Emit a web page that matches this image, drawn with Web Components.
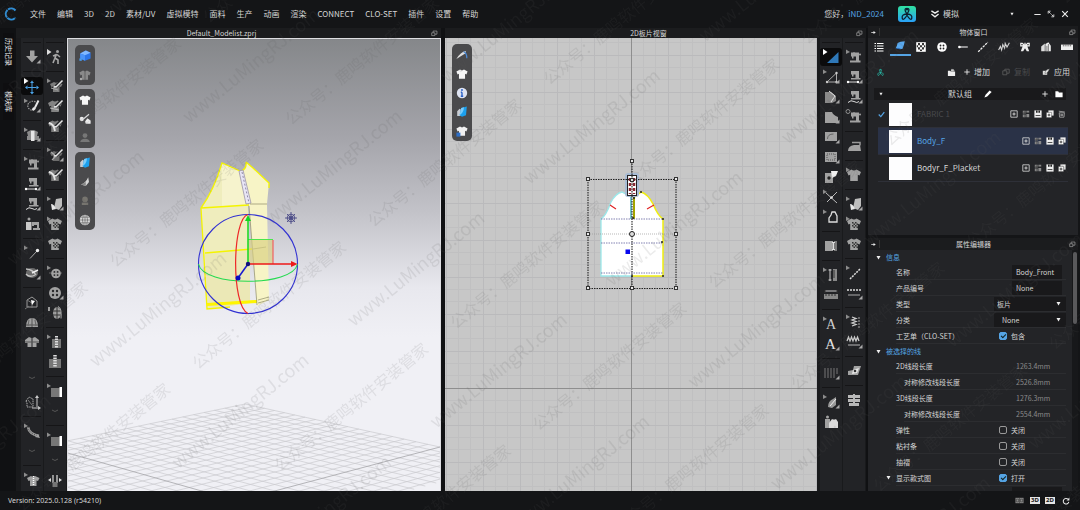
<!DOCTYPE html>
<html lang="zh-CN">
<head>
<meta charset="utf-8">
<title>Default_Modelist.zprj</title>
<style>
:root{--bar:#141517;--title:#1b1c1e;--panel:#232427;--line:#2e2f32;--text:#d6d6d6;--blue:#55a4e4;--dark:#19191b}
html,body{height:100%}
body{margin:0;background:#141517;color:var(--text);font-family:"Noto Sans CJK SC","Noto Sans",sans-serif;font-size:8px;line-height:12px;overflow:hidden}
</style>
</head>
<body>
<clo-app></clo-app>
<script>
/* ---------- icon set, drawn on a 20 x 20 grid ---------- */
const cur='<path d="M2 2.500l4 2.500-4 2z" fill="#8d8d8d"/>';
const curW='<path d="M2 2l4.500 3-4.500 3z" fill="#fff"/>';
const cor='<path d="M18.500 12.500v4h-4z" fill="#a8a8a8"/>';
const tee='<path d="M7.500 4.500q2.500 2 5 0l4.500 2.500-1.500 3.500-1.700-.7V16H6.200V9.800l-1.700.7L3 7z"/>';
const teeS='<path d="M9 6q2 1.500 4 0l4.500 2-1.500 3-1.500-.5V16H8v-5.500l-1.500.5L5 8z"/>';
const sew='<path d="M7 5.500h2.500V5h1v.5H15v8h1.500v2H6v-2h6V9.500H9.500v2H8v-2H7z"/><circle cx="16" cy="7.500" r="1"/>';
const sewS='<path d="M7 4h8v7h1.500v1.500H7V11h4.500V7.500H9.500v2H8v-2H7z"/>';
const check='<g fill="#343434"><path d="M8 8h1.500v1.500H8zM11 8h1.500v1.500H11zM9.500 9.500H11V11H9.500zM8 11h1.500v1.500H8zM11 11h1.500v1.500H11zM9.500 12.500H11V14H9.500zM12.500 9.500H14V11h-1.500zM12.500 12.500H14V14h-1.500z"/></g>';
const pen='<path d="M17.500 4l-6.500 6.500" fill="none" stroke="#232427" stroke-width="3.500"/><path d="M17.500 4.500l-6 6-2.500.5" fill="none" stroke="#e4e4e4" stroke-width="1.500"/>';
const L=(d,w=1,c='#a8a8a8',x='')=>`<path d="${d}" fill="none" stroke="${c}" stroke-width="${w}" ${x}/>`;
const btn='<circle cx="10" cy="10" r="6"/><g fill="#2a2a2c"><circle cx="8" cy="8" r="1.200"/><circle cx="12" cy="8" r="1.200"/><circle cx="8" cy="12" r="1.200"/><circle cx="12" cy="12" r="1.200"/></g>';
const fold='<path d="M4 15V9l3-3 1.500 1V15z" fill="#c8ccd2"/><path d="M7 14l2-9 7-2-1 11-5 2z" fill="#1ba0ee"/><path d="M7 14q5-3 5.500-10L9 5z" fill="#7accfa"/>';
const ICONS={
 down:'<path d="M8 3.500h4.500V9H16l-6 6.500L4 9h4z"/>'+cor,
 move:curW+L('M10 7v9M5.500 11.500h9',1,'#4ba3e8')+'<path d="M10 4.500l2 2.500H8zM10 18.500l2-2.500H8zM3 11.500L5.500 9.500v4zM17 11.500l-2.500-2v4z" fill="#4ba3e8"/>',
 lasso:cur+L('M13.500 6a5 4.500 0 1 0-1 8',1.200,'#999','stroke-dasharray="1.500 1"')+L('M16.500 4.500l-3.500 7',2,'#e8e8e8')+'<path d="M10 14q0-3 3-3l1 1q-1 3-4 2z" fill="#e8e8e8"/>'+cor,
 arrange:cur+'<path d="M5 7l4-2h3l4 2-1 4h2v4H5v-4h1z" fill="#8b8b8b"/><path d="M9 6h3.500v10H9z" fill="#e6e6e6"/>'+cor,
 sew:cur+sew,sewL:sewS+L('M4 15h10',1,'#ddd')+'<circle cx="4" cy="15" r="1.200" fill="#fff"/><circle cx="14" cy="15" r="1.200" fill="#fff"/>'+cor,
 sewC:sewS+L('M4 15.500q3-3 6-1t5 0',1,'#ddd')+cor,
 sewQ:'<circle cx="4" cy="4.500" r="2" fill="none" stroke="#8d8d8d"/>'+sew,
 people:'<circle cx="7" cy="5" r="1.500"/><path d="M4 8h5.500v8H4z" fill="#c9c9c9"/><path d="M10 8h7v6h1v2h-7v-2h4v-3h-3v1h-2z"/>',
 pin:cur+L('M8 15.500L15 8',1,'#aaa')+'<circle cx="15.500" cy="7.500" r="1.700" fill="#eee"/>',
 orbit:'<ellipse cx="10" cy="10" rx="6" ry="5" fill="#6a6a6a"/>'+L('M4 6q6 0 10 6M4 11q3 4 9 1',1.300,'#c4c4c4')+L('M10 10l6-3',1.500,'#eee')+cor,
 box:L('M5 8l5-3 5 4v6H5z',1,'#999')+L('M5 8l5 3M10 11v5M3 17l4-3',1,'#777')+'<path d="M9 8l4 1-3 4z" fill="#fff"/>',
 hat:'<path d="M4 15q0-9 6-9t6 9z"/>'+L('M4 13h12M10 6v9',1,'#555')+L('M7 8l-1 6M13 8l1 6',1,'#666'),
 open:'<path d="M3 8l4-3 2.500 1v9H5.500v-4H3zM17 8l-4-3-2.500 1v9h4v-4H17z"/>'+L('M3 10h14',1,'#555'),
 chev:L('M7 9l3 1.500L13 9',1,'#555'),
 measure:L('M4 9l3-4 4 2v8H5v-4z',1,'#aaa','stroke-dasharray="1.500 .7"')+L('M6 8l4 5',1,'#777')+L('M15 5v10M10 16h7',1,'#ccc')+'<path d="M15 3l2 3h-4zM19 16l-3-2v4z" fill="#ccc"/>',
 tape:cur+L('M6 6q1 7 11 9',2.500,'#9a9a9a')+L('M6 6q1 7 11 9',1,'#333','stroke-dasharray="1 1.500"')+'<path d="M18 17l-5-1 3-3z"/>',
 shirtZip:cur+teeS+L('M11.500 6v10',1.500,'#fff','stroke-dasharray="1 1"'),
 walk:curW.replace('#fff','#ddd')+'<circle cx="12.500" cy="4.500" r="1.500"/>'+L('M11.500 7L10 11l3 2v4M10 11l-2 5M11.500 7.500L8 9M12 7.500l3 2.500',1.600,'#a8a8a8'),
 penTee:cur+'<g fill="#7c7c7c">'+teeS+'</g>'+L('M6 12l7 2',1,'#aaa')+pen,
 penTee2:'<g fill="#838383">'+tee+'</g>'+L('M5 12l9 2',1,'#bbb')+pen,
 penTee3:'<g fill="#7c7c7c">'+tee+'</g>'+L('M4 7q5 1 6 8',1.800,'#e4e4e4')+pen,
 penTee4:cur+'<g fill="#6c6c6c">'+teeS+'</g>'+L('M6 7l5 4-4 4',1.200,'#aaa')+pen+cor,
 press:cur+'<path d="M9 14l2-9 6-1v8l-3 4z" fill="#bdbdbd"/><path d="M6 10q3 0 5 5l-4 1z" fill="#e8e8e8"/>'+cor,
 checkTee:cur+tee+check,checkTee2:tee+check,
 btnA:cur+'<path d="M4 9.500h13v1H4z" fill="#666"/><g transform="translate(3 2.500) scale(.8)">'+btn+'</g>',btn:btn+cor,
 btnB:'<path d="M3 4h2v4H3z"/><ellipse cx="12" cy="10" rx="4" ry="6"/>'+L('M8 8h8M8 12h8M12 4v12',1,'#333')+L('M13 3.500q4 1 3 12',1,'#aaa'),
 zip:cur+'<path d="M7 7h9v9H7z" fill="#777"/>'+L('M11.500 4v12',3,'#ddd','stroke-dasharray="1.500 1"'),
 zip2:'<path d="M4 7h12v9H4z" fill="#777"/>'+L('M10 3v12',3.500,'#ddd','stroke-dasharray="1.500 1"'),
 trim:cur+'<path d="M6 7h10v9H6z" fill="#777"/><path d="M14.500 6h2.500v10h-2.500z" fill="#fff"/>',
 align:L('M8 4v8M12 4v8',1.500,'#bbb')+'<path d="M7.500 11h5v5h-5z" fill="#777"/><path d="M3 9l3-2v4zM17 9l-3-2v4z" fill="#ddd"/>',
 tri:curW+'<path d="M17.500 5v11H6z" fill="#2f78b8"/>',
 triE:cur+L('M15.500 6v9H6z',1,'#aaa')+'<g fill="#ccc"><circle cx="15.500" cy="6" r="1.200"/><circle cx="15.500" cy="15" r="1.200"/><circle cx="6" cy="15" r="1.200"/></g>'+cor,
 shape:'<path d="M4 5h6l5 4v5l-4 2H4z" fill="#8a8a8a"/>'+L('M8 4l6 5-4 6',1,'#e0e0e0')+cor,
 poly:'<path d="M4 5h7q1 3 6 5v6H4z"/>'+cor,
 rect:'<path d="M4 5h12v9H4z"/>'+L('M6.500 12q0-5 6-5',1,'#666')+cor,
 rect2:'<path d="M4 5h12v10H4z"/>'+L('M6 7h8v6H6z',1,'#555','stroke-dasharray="1 1"')+cor,
 dart:'<path d="M4 6h8v10H4z"/><path d="M10 4h7l-2 5-4 2z" fill="#f0f0f0"/><circle cx="8" cy="11" r="1.700" fill="#222"/>',
 cut:cur+L('M6 15L16 5M5 6l11 10',1,'#bbb')+'<circle cx="10.500" cy="10.500" r="1.300" fill="#ddd"/>',
 trace:cur+L('M8 15v-4l2-3 1-3h3l2 4v6z',1.300,'#ddd'),
 fold2:'<path d="M4 5h8v10H4z"/><path d="M13 5h3v10h-3z" fill="#777"/>'+L('M12.500 6v8M11 6.500h3M11 13.500h3',1,'#ddd'),
 ruler:cur+'<path d="M12 4h4v12h-4z" fill="#888"/>'+L('M9 4v12M7.500 5h3M7.500 15h3',1,'#ccc')+L('M12 6h2M12 8h2M12 10h2M12 12h2',1,'#333'),
 rulerH:L('M4 6h12',1,'#ccc')+'<path d="M3 9h14v5H3z" fill="#888"/>'+L('M4 5v3M16 5v3M5 9v2M8 9v2M11 9v2M14 9v2',1,'#333'),
 seam:cur+L('M6 16L16 6',1.500,'#ddd','stroke-dasharray="2 1"'),
 seamH:L('M3 7h14',1.500,'#ddd','stroke-dasharray="2 1"')+L('M4 12h12',1,'#aaa')+cor,
 textA:cur+'<text x="5" y="15" font-family="Liberation Serif,serif" font-size="14" fill="#d0d0d0">A</text>',
 textB:'<text x="4" y="15" font-family="Liberation Serif,serif" font-size="15" fill="#e4e4e4">A</text>'+cor,
 zig:cur+L('M8 5l4 1.500-4 1.500 4 1.500-4 1.500 4 1.500-4 1.500',1.300,'#ccc')+L('M15 5v11',1,'#aaa','stroke-dasharray="2 1"'),
 zigH:L('M3 9l1.500-4L6 9l1.500-4L9 9l1.500-4L12 9l1.500-4L15 9',1.300,'#ccc')+L('M4 13h12',1,'#bbb')+cor,
 bars:L('M4 5v10M7 5v10M10 5v10M13 5v10M16 5v6',1,'#777')+cor,
 steam:'<path d="M4 10l5-1 1-4h7l-1 3-2 6H4z"/><path d="M9 9l6-2-2 5-5 1z" fill="#e8e8e8"/><circle cx="11" cy="10" r="1.300" fill="#333"/>',
 iron:'<path d="M4 15q0-5 6-6h6l1 6z"/>'+L('M8 6.500h8v3',1.500,'#999'),
 tee:cur+tee,handy:cur+'<path d="M7 15q0-6 5-8l3-2v8l-4 3z" fill="#999"/>'+L('M9 14l6-7',1,'#eee')+cor,
 quilt:'<path d="M4 5h5v3H4zM11 5h5v3h-5zM4 9h5v3H4zM11 9h5v3h-5zM5 13h4v3H5zM11 13h4v3h-4zM9 4h2v12H9z" fill="#b8b8b8"/>',
 avatar:'<circle cx="6.500" cy="5" r="1.500"/><path d="M4 7h5v9H4z"/><path d="M8 16v-5l3-4q2 1 4 0l2 3v6z" fill="#dadada"/>',
 cube:'<path d="M4 7l7-4 6 3v7l-7 3-6-3z" fill="#2c75e8"/><path d="M4 7l7-4 6 3-7 3z" fill="#80b8ff"/><path d="M10 9v7l-6-3V7z" fill="#4a94f8"/><path d="M3 13h3v3H3z" fill="#4aa0f0"/>',
 ghost:'<g fill="#8a8a8a">'+tee+'</g><path d="M10 5v11" stroke="#555"/><circle cx="5" cy="15" r="1.500" fill="#aaa"/>',
 white:'<g fill="#f6f6f6">'+tee+'</g>',
 scis:L('M8 10l7-6',1.500,'#ddd')+'<circle cx="6" cy="10" r="2.700" fill="#eee"/><path d="M10 13l3-4 4 3v4h-6z" fill="#eee"/>',
 head:'<g fill="#777"><circle cx="10" cy="7" r="3"/><path d="M4 15q1-4 6-4t6 4z"/></g>',fold,
 feather:'<path d="M5 13q6-2 9-9l1 6-4 5z" fill="#d6d6d6"/><path d="M5 13l6-3 0 5z" fill="#888"/>',
 bust:'<g fill="#77756f"><circle cx="10" cy="8" r="3.500"/><path d="M6 15v-3h8v3z"/></g>',
 globe:'<circle cx="10" cy="10" r="6.500" fill="#d8d8d8"/>'+L('M3.500 10h13M10 3.500v13M5 6.500h10M5 13.500h10M8 4q-2.500 6 0 12M12 4q2.500 6 0 12',.7,'#555'),
 needle:'<path d="M3 15q5-9 12-10l-1 3z" fill="#ddd"/>'+L('M12 6q4 1 4 8',1.500,'#4a8ad8'),
 info:'<circle cx="10" cy="10" r="6.500" fill="#dfe4f2"/>'+L('M10 9v5M8.500 9H10M8.500 14h3',1.700,'#2b62c8')+'<circle cx="10" cy="6.300" r="1.200" fill="#2b62c8"/>',
 teeInfo:'<g fill="#f0f0f0">'+tee+'</g><path d="M3 12h5v5H3z" fill="#2f70c8"/>',
 list:'<path d="M6 2h13v2H6zM6 7h13v2H6zM6 12h13v2H6zM6 17h13v2H6zM1 2h3v2H1zM1 7h3v2H1zM1 12h3v2H1zM1 17h3v2H1z" fill="#fff"/>',
 fabric:'<path d="M6 5q4-3 12-3-1 6-4 13-5 0-11-2 2-3 3-8z" fill="#5aaaf0"/><path d="M2 14l5-1 5 3z" fill="#2a6fc0"/>',
 grid:'<path d="M2 2h16v16H2z" fill="#fff"/><path d="M5 3.500h3.300V7H5zM11.700 3.500H15V7h-3.300zM8.300 7h3.400v3.500H8.300zM15 7h2v3.500h-2zM5 10.500h3.300V14H5zM11.700 10.500H15V14h-3.300zM8.300 14h3.400v2.500H8.300zM3 7h2v3.500H3z" fill="#333"/>',
 button:'<circle cx="10" cy="10" r="8" fill="#fff"/><g fill="#222"><circle cx="7.500" cy="7.500" r="1.500"/><circle cx="12.500" cy="7.500" r="1.500"/><circle cx="7.500" cy="12.500" r="1.500"/><circle cx="12.500" cy="12.500" r="1.500"/></g>',
 stitch:L('M4 10h14',1.700,'#fff')+'<circle cx="4" cy="10" r="2.200" fill="#fff"/>',
 dash:L('M2 18L18 2',2.200,'#eee','stroke-dasharray="4 1.500"'),
 pucker:L('M1 15l3-6 2 6 2-9 3 6 1-8 3 6 4-7',1.800,'#ddd'),
 bind:'<path d="M2 3h4l3 3V3h2v3l3-3h4v6h-4l3 8h-4l-3-5-3 5H3l3-8H2z" fill="#eee"/><path d="M4 5h2v2H4zM14 5h2v2h-2z" fill="#222"/>',
 fill:'<path d="M2 17V9l6-5v13z" fill="#ddd"/><path d="M9 5l5-3 4 6v9H9z" fill="#eee"/>'+L('M14 5v12M11.500 8v9',1,'#333'),
 tape2:'<path d="M0 6h20v9H0z" fill="#eee"/>'+L('M4 6v3M7 6v3M10 6v3M13 6v3M16 6v3',1,'#333'),
 addf:'<path d="M2 6h5l1.500 2H18v10H2z" fill="#eee"/><path d="M9 3l6 1v4H9z" fill="#ccc"/>'+L('M12 2l4 4',1.500,'#eee'),
 plus:L('M10 1v18M1 10h18',3,'#eee'),
 copy:L('M2 7h10v10H2zM7 7V3h11v10h-6',1.800,'#666'),
 apply:'<path d="M2 7h11v10H2z" fill="#ddd"/><path d="M7 13q1-9 12-11-1 6-9 12z" fill="#eee" stroke="#222"/>',
 folder:'<path d="M1 3h7l2 3h9v12H1z" fill="#fff"/>',
 pencil:'<path d="M1 19l3-7L14 1l5 4L8 16z" fill="#fff"/>',
 boxp:L('M2 2h16v16H2z',2,'#ddd')+L('M10 6v8M6 10h8',2.200,'#ddd'),
 four:'<path d="M2 2h7v7H2zM11 2h7v5h-7zM2 11h7v7H2zM11 10h7v8h-7z" fill="#8a8a8a"/>'+L('M2 6h16M6 2v16',1,'#333'),
 save:'<path d="M1 1h18v18H1z" fill="#eee"/><path d="M5 1h10v6H5zM4 13h12v2H4z" fill="#222"/><path d="M9 1h2v9H9z" fill="#eee"/>',
 dup:'<path d="M6 1h13v13H6z" fill="#eee"/><path d="M1 6h13v13H1z" fill="#fff" stroke="#222"/>'+L('M7.500 9v7M4 12.500h7',2,'#222'),
 trash:L('M3 7h13l-1 11H4zM2 3l15 2M6 11h7M6 14h7',1.800,'#bbb'),
 pop:L('M2 8h9v8H2zM6 8V3h11v9h-6',1.800,'#aaa'),
 arrow:L('M1 10h12',3,'#eee')+'<path d="M10 4l9 6-9 6z" fill="#eee"/>',
 clo:L('M10 10Q5 3 10 3t0 7M9 10q8 0 7 5t-7-5M11 10q-8 0-7 5t7-5',1.600,'currentColor')+'<circle cx="10" cy="4" r="1.500" fill="currentColor"/>',
 dbl:L('M1 2l9 6 9-6M1 10l9 7 9-7',3.500,'#eee'),
 caret:'<path d="M2 4h16l-8 14z" fill="#eee"/>',
 min:L('M1 10h18',2.800,'#eee'),
 max:L('M3 9V3h6M11 17h6v-6M4 4l5 5M16 16l-5-5',2.300,'#ddd'),
 x:L('M3 3l14 14M17 3L3 17',2.800,'#eee'),
 tick:L('M2 10l6 6L18 3',3.500,'#55a4e4'),
 split:'<path d="M1 4h18v12H1z" fill="#8a8a8a"/>'+L('M10 4v12M3 7h5v6H3zM12 7h5v6h-5z',1,'#222'),
 redo:L('M15 5.500a7 7 0 1 0 2 6.500',2.600,'#eee')+'<path d="M18.500 1v8h-7z" fill="#eee"/>'
};
const ic=(n,s=20)=>`<svg viewBox="0 0 20 20" width="${s}" height="${s}" fill="#a2a2a2" aria-hidden="true">${ICONS[n]||''}</svg>`;
const base='*{box-sizing:border-box}button{all:unset;box-sizing:border-box;display:flex;align-items:center;justify-content:center;cursor:default}svg{display:block;flex:none}a{color:inherit;text-decoration:none}';
function define(tag,html,setup){
  customElements.define(tag,class extends HTMLElement{
    constructor(){super();this.attachShadow({mode:'open'})}
    connectedCallback(){this.shadowRoot.innerHTML='<style>'+base+'</style>'+(typeof html==='function'?html(this):html);if(setup)setup(this.shadowRoot,this)}
  });
}

define('top-menu',()=>`<style>
:host{display:flex;align-items:center;height:28px;background:var(--bar);padding:0 10px 0 4px}
nav{display:flex;gap:11px;margin-left:12px;white-space:nowrap}.r{margin-left:auto;display:flex;align-items:center}
.u{color:var(--blue);margin-right:14px}.l{display:flex;width:18px;height:16px;border-radius:3px;background:linear-gradient(#30e0a0,#2aa0f8);color:#0c2030;align-items:center;justify-content:center;margin-right:15px}
.sim{gap:4px;margin-right:48px}.w{display:flex;gap:4px}.w button{width:10px}.w button:first-child{margin-right:11px}
</style><svg viewBox="0 0 14 14" width="14" height="14"><path d="M11.500 3.500A5.500 5.500 0 1 0 11.500 10.500" fill="none" stroke="#2f8fd8" stroke-width="2" stroke-dasharray="8 .6"/></svg>
<nav>${['文件','编辑','3D','2D','素材/UV','虚拟模特','面料','生产','动画','渲染','CONNECT','CLO-SET','插件','设置','帮助'].map(t=>`<a href="#">${t}</a>`).join('')}</nav>
<div class="r"><span>您好，</span><a class="u" href="#">iND_2024</a><span class="l">${ic('clo',16)}</span>
<button class="sim">${ic('dbl',8)}模拟</button>
<div class="w"><button aria-label="菜单">${ic('caret',4)}</button><button aria-label="最小化">${ic('min',7)}</button><button aria-label="最大化">${ic('max',8)}</button><button aria-label="关闭">${ic('x',8)}</button></div></div>`);

define('side-tab',`<style>:host{display:flex;align-items:center;justify-content:center;writing-mode:vertical-rl;text-orientation:sideways;background:#0e0e10;width:11px;font-size:7px;line-height:11px;color:#eee}</style><slot></slot>`);

define('view-title',()=>`<style>:host{display:flex;align-items:center;height:10px;background:var(--title);line-height:10px;font-size:7px}span{flex:1;text-align:center}button{width:14px}</style><span><slot></slot></span><button aria-label="弹出窗口">${ic('pop',7)}</button>`);

define('panel-title',()=>`<style>:host{display:flex;align-items:center;height:12px;background:var(--title);line-height:12px;font-size:7px}span{flex:1;text-align:center}button{width:11px}i{width:1px;height:8px;background:#333}</style><button aria-label="折叠">${ic('arrow',5)}</button><i></i><span><slot></slot></span><button aria-label="弹出窗口">${ic('pop',7)}</button>`);

/* A column of tool buttons: "-" is a rule, "*" marks the active tool, "chev" ends a group. */
define('tool-column',h=>`<style>
:host{display:flex;flex-direction:column;width:22px;background:#222326;overflow:hidden}
button{height:20px;width:22px;flex:none}.on{background:#0b0b0c;border-radius:3px;height:18px;margin:1px 0}
hr{border:0;margin:4px 2px;height:1px;background:#151517;flex:none}b{flex:none}</style>`+
h.getAttribute('tools').split(' ').map(t=>t==='-'?'<hr>':/^\d+$/.test(t)?`<b style="height:${t}px"></b>`:t[0]==='*'?`<button class="on" aria-label="${t.slice(1)}">${ic(t.slice(1))}</button>`:`<button aria-label="${t}">${ic(t)}</button>`).join(''));

define('float-palette',h=>`<style>:host{display:flex;flex-direction:column;padding:1px 0;width:20px;background:#4a4a4c;border-radius:5px}button{height:19px}</style>`+
h.getAttribute('tools').split(' ').map(t=>`<button aria-label="${t}">${ic(t,16)}</button>`).join(''));

/* Perspective floor: maps the unit square onto a quad and draws its lines. */
function floor(){
  const P=[[245,404],[440,447],[237,501],[43,446]],[a,b,c,d]=P;
  const dx1=b[0]-c[0],dx2=d[0]-c[0],sx=a[0]-b[0]+c[0]-d[0],dy1=b[1]-c[1],dy2=d[1]-c[1],sy=a[1]-b[1]+c[1]-d[1];
  const D=dx1*dy2-dx2*dy1,g=(sx*dy2-dx2*sy)/D,k=(dx1*sy-sx*dy1)/D;
  const m=(u,v)=>{const w=g*u+k*v+1;return [((b[0]-a[0]+g*b[0])*u+(d[0]-a[0]+k*d[0])*v+a[0])/w,((b[1]-a[1]+g*b[1])*u+(d[1]-a[1]+k*d[1])*v+a[1])/w].map(n=>n.toFixed(1)).join(' ')};
  let s='',e='';const N=18;
  for(let i=0;i<=N+5;i++){const t=i/N,p=`M${m(t,0)}L${m(t,1.3)}M${m(0,t)}L${m(1.3,t)}`;if(i===N)e=p;else s+=p}
  return `<path d="${s}" stroke="#cacacf" stroke-width=".7" fill="none"/><path d="${e}" stroke="#a4a4a8" stroke-width=".8" fill="none"/>`;
}
define('view-3d',()=>`<style>
:host{display:block;position:relative;overflow:hidden;border:1px solid #dedee2;border-bottom:0;background:linear-gradient(#85878a,#a5a5ab 22%,#c2c2c8 38%,#e8e8ee 55%,#f0f0f5 66%)}
.s{position:absolute;width:100%;height:100%}.p{position:absolute;left:7px;top:6px;display:flex;flex-direction:column;gap:4px}</style>
<svg class="s" viewBox="68 39 372 452" preserveAspectRatio="xMidYMid slice">${floor()}
<path d="M201 208Q214 190 222 163L240 171 248 204 250 303 207 309Z" fill="#efedbd"/>
<path d="M222 163L240 171 248 204 222 206Z" fill="#f6f3cd"/>
<path d="M246 162L253 168 269 183 267 204 269 300 257 306 249 206 241 171Q247 170 246 162Z" fill="#f7f4c6"/>
<path d="M205 253L250 249V303L207 309Z" fill="#ebe8b6"/>
<path d="M201 208Q214 190 222 163L240 171M246 162L253 168 269 183V188M201 208L249 205M205 253L252 249M207 304L257 301M201 208L207 309 230 307M246 162Q247 169 241 171" fill="none" stroke="#f4f400" stroke-width="1.300"/>
<path d="M207 303L257 300V303L207 306Z" fill="#fff500"/>
<path d="M239 171L243 170 251 203 246 204Z" fill="#e9e6f6" stroke="#8f88a0" stroke-width=".7"/><path d="M242 172L249 203" stroke="#777090" stroke-width=".8" stroke-dasharray="2 2"/>
<path d="M250 204L267 204M249 206L257 305M253 249L266 247M258 300L269 297M258 303L269 300" stroke="#8d8b68" stroke-width=".7" fill="none"/>
<path d="M248 240H273V264H248Z" fill="#d8d080" opacity=".65"/><path d="M248 239.500H273" stroke="#4be64b"/><path d="M273 240V264" stroke="#f06060" stroke-width="1.200"/>
<circle cx="248" cy="264" r="49.500" fill="none" stroke="#3232d2" stroke-width="1.100"/>
<path d="M198.500 264C203 287 293 287 297.500 264" fill="none" stroke="#25da50" stroke-width="1.100"/>
<path d="M248 214.500C232 218 231 306 248 313.500" fill="none" stroke="#ee2828" stroke-width="1.200"/>
<path d="M248 264V220" stroke="#10d820" stroke-width="1.500"/><path d="M248 215L251 221H245Z" fill="#10d820"/>
<path d="M248 264H292" stroke="#ee1818" stroke-width="1.500"/><path d="M297.500 264L291 267V261Z" fill="#ee1818"/>
<path d="M248 264L238 278" stroke="#1818d0" stroke-width="1.500"/><circle cx="238" cy="278" r="2.500" fill="#0808c0"/><circle cx="248" cy="264" r="2.200" fill="#10107a"/>
<g fill="none" stroke="#4a4a86" stroke-width=".9"><circle cx="291" cy="218" r="3.800"/><circle cx="291" cy="218" r="1.800"/><path d="M291 212V224M285 218H297M287 214L295 222M295 214L287 222"/></g>
</svg>
<div class="p"><float-palette tools="cube ghost"></float-palette><float-palette tools="white scis head"></float-palette><float-palette tools="fold feather bust globe"></float-palette></div>`);

define('view-2d',()=>{
 const h=[[588,179],[676,179],[588,234],[676,234],[588,288],[632,288],[676,288],[632,161],[632,180]].map(([x,y])=>`<rect x="${x-1.5}" y="${y-1.5}" width="3" height="3"/>`).join('');
 const dots=[[641,192],[634,198],[633,218],[663,219],[662,242],[632,276],[663,276]].map(([x,y])=>`<circle cx="${x}" cy="${y}" r="1"/>`).join('');
 return `<style>:host{display:block;position:relative;overflow:hidden;background:#c7c7c7}.s{position:absolute;width:100%;height:100%}.p{position:absolute;left:7px;top:6px}</style>
<svg class="s" viewBox="445 38 372 453" preserveAspectRatio="xMidYMid slice">
<defs><pattern id="g" x="631" y="388" width="37" height="37" patternUnits="userSpaceOnUse"><path d="M12.500 0V37M24.500 0V37M0 12.500H37M0 24.500H37" stroke="#c0c0c1"/><path d="M.5 0V37M0 .5H37" stroke="#bababc"/></pattern></defs>
<rect x="400" y="0" width="500" height="540" fill="url(#g)"/>
<path d="M631.500 0V540M400 388.500H900" stroke="#8e8e8e"/>
<path d="M601 276V219Q606 216 611 202 616 193 622 192L632 197 641 192Q648 194 653 204 658 216 663 219V276Z" fill="#fff"/>
<path d="M632 276H601V219Q606 216 611 202 616 193 622 192L629 196" fill="none" stroke="#9be8ea" stroke-width="1.300"/>
<path d="M631 196V219" stroke="#76c4cc" stroke-width="2"/><path d="M634 197V219" stroke="#a4a400" stroke-width="2"/>
<path d="M635 197L641 192Q648 194 653 204 658 216 663 219V276H632" fill="none" stroke="#f0ee10" stroke-width="1.500"/>
<path d="M601 219H663M601 243H663M601 273H663" stroke="#6262a0" stroke-width=".8" stroke-dasharray="1.500 1"/>
<path d="M588 234H676" stroke="#999" stroke-width=".7" stroke-dasharray="1 1"/>
<path d="M610 205L616 209M647 209L654 205" stroke="#e02020" stroke-width="1.100"/>
<rect x="625" y="173" width="14" height="24" rx="3" fill="#a9bdd6"/><rect x="627.500" y="175.500" width="9" height="20" fill="#fff" stroke="#222"/><path d="M630 178V194M634 178V194" stroke="#8c2631" stroke-width="2.500" stroke-dasharray="3 2"/>
<path d="M588 179.500H676V288.500H588ZM632 161V288" fill="none" stroke="#222" stroke-width="1.100" stroke-dasharray="1.500 1"/>
<g fill="#e8e8e8" stroke="#333" stroke-width="1">${h}</g><g fill="#222">${dots}</g>
<circle cx="632" cy="234" r="2.500" fill="#ddd" stroke="#222"/><rect x="625.500" y="249.500" width="4.500" height="4.500" fill="#0808ee"/></svg>
<float-palette class="p" tools="needle white info fold teeInfo"></float-palette>`});

define('fabric-row',h=>{
 const on=h.hasAttribute('selected'),used=h.hasAttribute('used');
 return `<style>:host{display:flex;align-items:center;height:27px;margin:0 10px;background:${on?'#2a3247':'transparent'};border-bottom:1px solid #2e3038}
.c{width:11px}.t{width:23px;height:23px;background:#fdfdfe;margin-right:5px}.n{flex:1;color:${on?'var(--blue)':used?'#48494c':'var(--text)'}}
button{width:12px}.b{display:flex}</style><span class="c">${used?ic('tick',7):''}</span><span class="t"></span><span class="n"><slot></slot></span>
<span class="b">${['boxp','four','save','dup'].concat(used?['trash']:[]).map(n=>`<button aria-label="${n}">${ic(n,8)}</button>`).join('')}</span>`});

define('object-panel',()=>`<style>
:host{display:flex;flex-direction:column;background:var(--panel)}
.tabs{display:flex;padding:0 1px;height:18px}.tabs button{flex:1}.tabs .on{border-bottom:2px solid var(--blue)}
.act{display:flex;align-items:center;height:32px;padding:0 8px 0 8px}.act button{gap:4px}.a1{margin-left:auto}.act .a2{margin-left:8px}.act .a3{margin-left:12px;color:#4a4b4d}.act .a4{margin-left:12px}.clo{color:#27b7a4}
.grp{display:flex;align-items:center;height:12px;margin:0 12px 1px 6px;background:var(--dark)}.grp .n{flex:1;display:flex;justify-content:center;align-items:center;gap:12px;padding-left:14px}.grp button{width:14px}</style>
<panel-title>物体窗口</panel-title>
<div class="tabs">${['list','fabric','grid','button','stitch','dash','pucker','bind','fill','tape2'].map((n,i)=>`<button class="${i==1?'on':''}" aria-label="${n}">${ic(n,n==='list'?10:12)}</button>`).join('')}</div>
<div class="act"><span class="clo">${ic('clo',9)}</span><button class="a1" aria-label="打开">${ic('addf',9)}</button><button class="a2">${ic('plus',6)}增加</button><button class="a3" disabled>${ic('copy',8)}复制</button><button class="a4">${ic('apply',8)}应用</button></div>
<div class="grp"><button aria-label="展开">${ic('caret',4)}</button><span class="n">默认组${ic('pencil',8)}</span><button aria-label="增加">${ic('plus',6)}</button><button aria-label="文件夹">${ic('folder',8)}</button></div>
<fabric-row used>FABRIC 1</fabric-row><fabric-row selected>Body_F</fabric-row><fabric-row>Bodyr_F_Placket</fabric-row>`);

define('prop-row',h=>{
 const k=h.getAttribute('kind'),v=h.getAttribute('value')||'',l=h.getAttribute('label'),ind=h.hasAttribute('indent'),sub=h.hasAttribute('group');
 const f=k==='input'?`<input id="f" type="text" value="${v}">`:k==='select'?`<span class="sel"><select id="f"><option>${v}</option></select>${ic('caret',5)}</span>`:k==='check'?`<span class="ck"><input id="f" type="checkbox" ${h.hasAttribute('on')?'checked':''}><label for="f">${v}</label></span>`:`<output id="f">${v}</output>`;
 return `<style>:host{display:flex;height:16px;flex:none;align-items:center;margin:0 12px 0 ${ind?36:28}px;border-bottom:1px solid #2c2d30;font-size:7px;white-space:nowrap}
.l{flex:1;display:flex;align-items:center}.l svg{margin:0 5px 0 -10px}.v{width:72px;display:flex;flex:none}
input[type=text]{font:inherit;color:var(--text);border:0;background:var(--dark);width:50px;height:14px;margin-left:18px;padding:0 4px;outline:0}
.sel{position:relative;display:block;width:72px}.sel svg{position:absolute;right:5px;top:4px}select{appearance:none;font:inherit;color:var(--text);border:0;background:var(--dark);width:72px;height:14px;padding:0 ${v==='None'?8:3}px;outline:0}
.ck{display:flex;align-items:center;gap:4px;padding-left:5px}input[type=checkbox]{appearance:none;width:8px;height:8px;margin:0;border:1px solid #999;border-radius:2px}
input:checked{border-color:var(--blue);background:var(--blue)}input:checked::after{content:"";display:block;width:4px;height:2px;border:solid #122;border-width:0 0 1px 1px;transform:translate(1px,1px) rotate(-45deg)}
output{padding-left:22px;color:#8b8b8b}</style><label class="l" for="f">${sub?ic('caret',5):''}${l}</label><span class="v">${f}</span>`});

define('prop-group',()=>`<style>:host{display:block;flex:none}h3{margin:0;display:flex;align-items:center;gap:5px;height:14px;padding-left:8px;font:inherit;font-size:7px;color:var(--blue)}</style><h3>${ic('caret',5)}<slot name="t"></slot></h3><slot></slot>`);

define('property-panel',`<style>:host{display:flex;flex-direction:column;overflow:hidden;background:var(--panel)}.b{flex:1;min-height:0;overflow:hidden;display:flex}.l{flex:1;min-width:0;overflow:hidden}.sb{width:6px;background:#17181a;padding:2px 1px;margin-left:-6px}.sb i{display:block;width:4px;height:72px;border-radius:2px;background:#59595b}</style>
<panel-title>属性编辑器</panel-title><div class="b"><div class="l">
<prop-group><span slot="t">信息</span>
<prop-row label="名称" kind="input" value="Body_Front"></prop-row><prop-row label="产品编号" kind="input" value="None"></prop-row><prop-row label="类型" kind="select" value="板片"></prop-row><prop-row label="分类" kind="select" value="None"></prop-row><prop-row label="工艺单（CLO-SET）" kind="check" on value="包含"></prop-row></prop-group>
<prop-group><span slot="t">被选择的线</span>
<prop-row label="2D线段长度" value="1263.4mm"></prop-row><prop-row indent label="对称修改线段长度" value="2526.8mm"></prop-row><prop-row label="3D线段长度" value="1276.3mm"></prop-row><prop-row indent label="对称修改线段长度" value="2554.4mm"></prop-row>
<prop-row label="弹性" kind="check" value="关闭"></prop-row><prop-row label="粘衬条" kind="check" value="关闭"></prop-row><prop-row label="抽褶" kind="check" value="关闭"></prop-row><prop-row group label="显示款式图" kind="check" on value="打开"></prop-row><prop-row label="" kind="input" value="0"></prop-row></prop-group>
</div><div class="sb"><i></i></div></div>`);

define('status-bar',()=>`<style>:host{display:flex;align-items:center;height:19px;padding:0 9px 0 8px;background:var(--bar);font:7px/12px "Noto Sans",sans-serif}.r{margin-left:auto;display:flex;gap:5px}button{width:11px;font-size:6px;line-height:7px}.d{background:#e4e4e4;color:#111;font-weight:700;width:10px;height:7px;align-self:center}</style>
<span>Version: 2025.0.128 (r54210)</span><span class="r"><button aria-label="分屏">${ic('split',9)}</button><button class="d">3D</button><button class="d">2D</button><button aria-label="刷新">${ic('redo',8)}</button></span>`);

/* Diagonal tiled watermark over the whole window. */
define('water-mark',()=>{
 let t='';const a=39*Math.PI/180,C=Math.cos(a),S=Math.sin(a);
 const put=(u0,v0,s,z)=>{for(let i=-5;i<6;i++)for(let j=-6;j<7;j++){const u=u0+226*i,v=v0+131*j,x=u*C+v*S,y=-u*S+v*C;if(x>-120&&x<1070&&y>0&&y<600)t+=`<text x="${u}" y="${v}" font-size="${z}">${s}</text>`}};
 put(373,543,'公众号：鹿鸣软件安装管家',16);put(295,608,'www.LuMingRJ.com',18);
 return `<style>:host{position:fixed;inset:0;pointer-events:none;overflow:hidden}svg{overflow:visible}</style><svg width="100%" height="100%" fill="#58585c" fill-opacity=".12"><g transform="rotate(-39)">${t}</g></svg>`});

define('clo-app',`<style>
:host{display:grid;grid-template-rows:auto minmax(0,1fr) auto;height:100vh;background:#101113}
main{display:grid;grid-template-columns:14px minmax(0,425fr) minmax(0,423fr) 212px;column-gap:2px;min-height:0}
.tabs{display:flex;flex-direction:column;gap:13px;padding:5px 0 0 3px}.tabs side-tab{height:37px}
.w{display:flex;flex-direction:column;min-height:0}.b{display:flex;flex:1;min-height:0}.tools{display:flex;gap:1px;background:#191a1c;padding:0 1px}.b>view-3d,.b>view-2d{flex:1;min-width:0}
.l{background:#191a1c}.l .tools{padding-left:5px}.r{margin-left:2px}.r .tools{padding:0 1px 0 3px}
aside{display:flex;flex-direction:column;gap:3px;min-height:0;background:#141517;margin-top:-2px;padding-right:2px}object-panel{height:209px;flex:none}property-panel{flex:1;min-height:0}</style>
<top-menu></top-menu>
<main><div class="tabs"><side-tab>历史记录</side-tab><side-tab>模块库</side-tab></div>
<section class="w l"><view-title>Default_Modelist.zprj</view-title><div class="b"><div class="tools">
<tool-column tools="- down - *move lasso - arrange - sew sewL sewC people - pin orbit - box hat open 16 chev 4 measure - tape chev - shirtZip"></tool-column>
<tool-column tools="- walk - penTee penTee2 penTee3 - penTee4 penTee3 - press checkTee checkTee2 - btnA btn btnB - zip zip2 - trim chev - trim chev 1 align"></tool-column></div><view-3d></view-3d></div></section>
<section class="w r"><view-title>2D板片视窗</view-title><div class="b"><view-2d></view-2d><div class="tools">
<tool-column tools="- *tri triE shape poly rect rect2 dart cut trace - fold2 - ruler rulerH - textA textB - bars - handy avatar"></tool-column>
<tool-column tools="- sew sewL sewC sewQ - iron - tee - press checkTee checkTee2 - seam seamH - zig zigH - steam - quilt"></tool-column></div></div></section>
<aside><object-panel></object-panel><property-panel></property-panel></aside></main>
<status-bar></status-bar><water-mark></water-mark>`);
</script>
</body>
</html>
